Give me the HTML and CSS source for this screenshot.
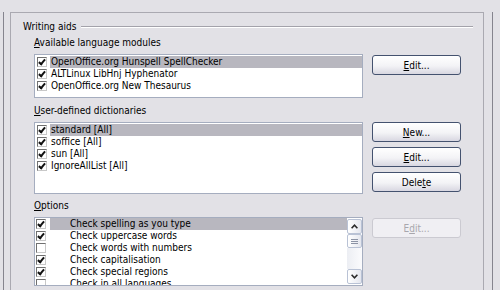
FILE: index.html
```html
<!DOCTYPE html>
<html lang="en">
<head>
    <meta charset="UTF-8">
    <title>Writing aids</title>
    <link rel="stylesheet" href="styles.css">
</head>
<body>

    <div class="tab">
        <div class="frame">
            <!-- Titre du groupe -->
            <div class="legend"><span>Writing aids</span><div class="rule"></div></div>

            <div class="content">
                <section class="group group-modules">
                    <div class="caption"><u>A</u>vailable language modules</div>
                    <div class="row">
                        <div class="list list-modules">
                            <div class="item"><span class="check on"></span><span class="name selected">OpenOffice.org Hunspell SpellChecker</span></div>
                            <div class="item"><span class="check on"></span><span class="name">ALTLinux LibHnj Hyphenator</span></div>
                            <div class="item"><span class="check on"></span><span class="name">OpenOffice.org New Thesaurus</span></div>
                        </div>
                        <div class="buttons">
                            <button class="btn"><u>E</u>dit...</button>
                        </div>
                    </div>
                </section>

                <section class="group group-dicts">
                    <div class="caption"><u>U</u>ser-defined dictionaries</div>
                    <div class="row">
                        <div class="list list-dicts">
                            <div class="item"><span class="check on"></span><span class="name selected">standard [All]</span></div>
                            <div class="item"><span class="check on"></span><span class="name">soffice [All]</span></div>
                            <div class="item"><span class="check on"></span><span class="name">sun [All]</span></div>
                            <div class="item"><span class="check on"></span><span class="name">IgnoreAllList [All]</span></div>
                        </div>
                        <div class="buttons buttons-dicts">
                            <button class="btn"><u>N</u>ew...</button>
                            <button class="btn"><u>E</u>dit...</button>
                            <button class="btn">Dele<u>t</u>e</button>
                        </div>
                    </div>
                </section>

                <section class="group group-options">
                    <div class="caption"><u>O</u>ptions</div>
                    <div class="row">
                        <div class="list list-options">
                            <div class="rows">
                                <div class="item opt"><span class="check on"></span><span class="name selected">Check spelling as you type</span></div>
                                <div class="item opt"><span class="check on"></span><span class="name">Check uppercase words</span></div>
                                <div class="item opt"><span class="check"></span><span class="name">Check words with numbers</span></div>
                                <div class="item opt"><span class="check on"></span><span class="name">Check capitalisation</span></div>
                                <div class="item opt"><span class="check on"></span><span class="name">Check special regions</span></div>
                                <div class="item opt"><span class="check"></span><span class="name">Check in all languages</span></div>
                            </div>
                            <!-- Barre de défilement -->
                            <div class="scroll">
                                <div class="sb-btn">
                                    <svg width="7" height="5" viewBox="0 0 7 5"><path d="M0.6 4.2 L3.5 1.2 L6.4 4.2"/></svg>
                                </div>
                                <div class="sb-btn thumb">
                                    <svg width="7" height="5" viewBox="0 0 7 5"><path d="M0 0.5 H7 M0 2.5 H7 M0 4.5 H7"/></svg>
                                </div>
                                <div class="track"></div>
                                <div class="sb-btn">
                                    <svg width="7" height="5" viewBox="0 0 7 5"><path d="M0.6 0.8 L3.5 3.8 L6.4 0.8"/></svg>
                                </div>
                            </div>
                        </div>
                        <div class="buttons">
                            <button class="btn" disabled>E<u>d</u>it...</button>
                        </div>
                    </div>
                </section>
            </div>
        </div>
    </div>

</body>
</html>
```

FILE: styles.css
```css
body {
    margin: 0;
    height: 290px;
    overflow: hidden;
    background-color: #e2e1e6;
    font-family: "DejaVu Sans Condensed", "DejaVu Sans", sans-serif;
    font-stretch: condensed;
    font-size: 10px;
    color: #000;
}

u {
    text-decoration-thickness: 1px;
    text-underline-offset: 1px;
}

.tab {
    margin-left: 3px;
    width: 488px;
    height: 290px;
    border-left: 1px solid #85848e;
    border-right: 1px solid #85848e;
}

.frame {
    margin: 12px 0 0 6px;
    width: 472px;
    height: 290px;
    border: 1px solid #aaa9b1;
    border-bottom: none;
}

.legend {
    display: flex;
    align-items: center;
    padding: 8px 10px 0 12px;
    line-height: 12px;
}

.rule {
    flex: 1;
    margin-left: 5px;
    border-top: 1px solid #a3a2aa;
    border-bottom: 1px solid #fff;
}

.content {
    padding-left: 23px;
}

.group-modules {
    margin-top: 4px;
}

.group-dicts {
    margin-top: 7px;
}

.group-options {
    margin-top: 6px;
}

.caption {
    line-height: 12px;
    margin-bottom: 5px;
}

.row {
    display: flex;
    align-items: flex-start;
    gap: 9px;
}

.list {
    width: 329px;
    box-sizing: border-box;
    border: 1px solid #a5adbf;
    background-color: #fff;
    overflow: hidden;
}

.list-modules {
    height: 44px;
    padding-top: 1px;
}

.list-dicts {
    height: 72px;
    padding-top: 1px;
}

.list-options {
    height: 69px;
    display: flex;
}

.rows {
    flex: 1;
    overflow: hidden;
}

.item {
    display: flex;
    align-items: center;
    height: 12px;
    line-height: 12px;
    white-space: nowrap;
}

.item .check {
    margin: 0 3px 0 2px;
}

.item.opt .check {
    margin: 0 4px 0 1px;
}

.name {
    flex: 1;
    padding-left: 1px;
}

.opt .name {
    padding-left: 20px;
}

.name.selected {
    background-color: #b8b7bf;
}

/* Case à cocher */
.check {
    width: 10px;
    height: 10px;
    flex: none;
    box-sizing: border-box;
    border: 1px solid;
    border-color: #707070 #c8c8c8 #c8c8c8 #707070;
    display: flex;
    justify-content: center;
    align-items: center;
}

.check.on::after {
    content: "";
    width: 2px;
    height: 5px;
    border: solid #111;
    border-width: 0 2px 2px 0;
    transform: translate(0, -1px) rotate(40deg);
}

.scroll {
    width: 15px;
    display: flex;
    flex-direction: column;
    padding: 1px 0;
    box-sizing: border-box;
}

.sb-btn {
    height: 15px;
    flex: none;
    box-sizing: border-box;
    border: 1px solid #b9c2d5;
    border-radius: 2px;
    background: linear-gradient(90deg, #ffffff, #e4e6ee);
    display: flex;
    justify-content: center;
    align-items: center;
}

.sb-btn svg path {
    fill: none;
    stroke: #2a2a2a;
    stroke-width: 1.6;
}

.sb-btn.thumb {
    height: 14px;
}

.sb-btn.thumb svg path {
    stroke: #8c93a5;
    stroke-width: 1;
}

.track {
    flex: 1;
    background: linear-gradient(90deg, #eceef3, #fbfbfd);
}

.buttons {
    display: flex;
    flex-direction: column;
    gap: 5px;
    padding-top: 1px;
}

.buttons-dicts {
    padding-top: 0;
}

.btn {
    width: 89px;
    height: 20px;
    box-sizing: border-box;
    padding: 0;
    border: 1px solid #44526f;
    border-radius: 3px;
    background: linear-gradient(#ffffff, #f3f3f6 55%, #d8d7e1);
    font: inherit;
    color: #000;
}

.btn:disabled {
    border-color: #cbcad1;
    background: #f0eff3;
    color: #a8a7ad;
}
```
